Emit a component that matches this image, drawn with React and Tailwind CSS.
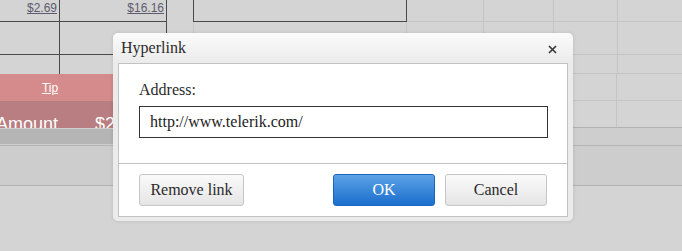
import React from "react";

// Hyperlink dialog over a dimmed spreadsheet
const Dialog = () => (
  <div
    className="absolute left-[113px] top-[33px] w-[460px] h-[188px] rounded-[5px] flex flex-col bg-[linear-gradient(#fbfbfb,#ebebeb_30px,#ebebeb)] shadow-[0_0_4px_rgba(0,0,0,0.12)] px-[5px] pb-[4px]"
    style={{ fontFamily: '"Liberation Serif", "Times New Roman", serif' }}
  >
    {/* Title bar */}
    <div className="h-[30px] flex items-center justify-between pl-[3px] pr-[11px] shrink-0">
      <span className="text-[16px] leading-[18px] text-[#2a2a2a]">Hyperlink</span>
      <svg width="9" height="9" viewBox="0 0 9 9" className="mt-[2px]">
        <path d="M1 1 L8 8 M8 1 L1 8" stroke="#3a3a3a" strokeWidth="1.7" />
      </svg>
    </div>

    {/* Content */}
    <div className="flex-1 bg-white border border-[#c2c2c2] flex flex-col">
      <div className="pt-[17px] pb-[25px] pl-[20px] pr-[19px] border-b border-[#c2c2c2]">
        <div className="text-[16px] leading-[18px] text-[#2a2a2a]">Address:</div>
        <div className="mt-[7px] h-[32px] border border-[#333] flex items-center pl-[10px] text-[16px] leading-[18px] text-[#222]">
          http://www.telerik.com/
        </div>
      </div>
      <div className="flex items-center pt-[10px] px-[20px]">
        <button className="w-[105px] h-[32px] rounded-[3px] border border-[#c6c6c6] bg-[linear-gradient(#fafafa,#e5e5e5)] text-[16px] leading-[18px] text-[#2a2a2a]">
          Remove link
        </button>
        <div className="flex-1" />
        <button className="w-[102px] h-[32px] rounded-[3px] border border-[#1a67c2] bg-[linear-gradient(#5ca2e6,#1b6ecd)] text-[16px] leading-[18px] text-white">
          OK
        </button>
        <button className="ml-[10px] w-[102px] h-[32px] rounded-[3px] border border-[#c6c6c6] bg-[linear-gradient(#fafafa,#e5e5e5)] text-[16px] leading-[18px] text-[#2a2a2a]">
          Cancel
        </button>
      </div>
    </div>
  </div>
);

export default function App() {
  return (
    <div
      className="relative w-[682px] h-[251px] overflow-hidden bg-[#d4d4d4]"
      style={{ fontFamily: '"Liberation Sans", Arial, sans-serif' }}
    >
      <div className="flex flex-col">
        {/* Row 1 */}
        <div className="flex h-[22px]">
          <div className="w-[60px] shrink-0 border-r border-b border-[#4a4a4a] text-right pr-[2px] text-[12px] leading-[15px] pt-[1px] text-[#5c5c6e] underline">$2.69</div>
          <div className="w-[107px] shrink-0 border-r border-b border-[#4a4a4a] text-right pr-[2px] text-[12px] leading-[15px] pt-[1px] text-[#5c5c6e] underline">$16.16</div>
          <div className="w-[27px] shrink-0 border-r border-[#4a4a4a] border-b-[#c4c4c4]" />
          <div className="w-[213px] shrink-0 border-r border-b border-[#4a4a4a]" />
          <div className="w-[77px] shrink-0 border-r border-b border-[#c4c4c4]" />
          <div className="w-[70px] shrink-0 border-r border-b border-[#c4c4c4]" />
          <div className="w-[64px] shrink-0 border-r border-b border-[#c4c4c4]" />
          <div className="flex-1 border-b border-[#c4c4c4]" />
        </div>
        {/* Row 2 */}
        <div className="flex h-[33px]">
          <div className="w-[60px] shrink-0 border-r border-b border-[#4a4a4a]" />
          <div className="w-[107px] shrink-0 border-r border-b border-[#4a4a4a]" />
          <div className="w-[27px] shrink-0 border-r border-b border-[#c4c4c4]" />
          <div className="w-[213px] shrink-0 border-r border-b border-[#c4c4c4]" />
          <div className="w-[77px] shrink-0 border-r border-b border-[#c4c4c4]" />
          <div className="w-[70px] shrink-0 border-r border-b border-[#c4c4c4]" />
          <div className="w-[64px] shrink-0 border-r border-b border-[#c4c4c4]" />
          <div className="flex-1 border-b border-[#c4c4c4]" />
        </div>
        {/* Row 3 */}
        <div className="flex h-[19px]">
          <div className="w-[60px] shrink-0 border-r border-[#4a4a4a]" />
          <div className="w-[107px] shrink-0 border-r border-[#4a4a4a]" />
          <div className="w-[27px] shrink-0 border-r border-b border-[#c4c4c4]" />
          <div className="w-[213px] shrink-0 border-r border-b border-[#c4c4c4]" />
          <div className="w-[77px] shrink-0 border-r border-b border-[#c4c4c4]" />
          <div className="w-[70px] shrink-0 border-r border-b border-[#c4c4c4]" />
          <div className="w-[64px] shrink-0 border-r border-b border-[#c4c4c4]" />
          <div className="flex-1 border-b border-[#c4c4c4]" />
        </div>
        {/* Pink summary band */}
        <div className="flex h-[54px]">
          <div className="w-[573px] shrink-0 flex flex-col">
            <div className="h-[27px] bg-[#d58a8b] flex">
              <div className="w-[100px] text-center text-white underline text-[12px] leading-[15px] pt-[7px]">Tip</div>
            </div>
            <div className="h-[27px] bg-[#b87e81] overflow-hidden flex text-white text-[18px] leading-[18px] pt-[14px]">
              <span className="ml-[-4px]">Amount</span>
              <span className="ml-[37px]">$2</span>
            </div>
          </div>
          <div className="flex-1 flex flex-col">
            <div className="h-[27px] flex border-b border-[#c4c4c4]">
              <div className="w-[44px] border-r border-[#c4c4c4]" />
              <div className="flex-1" />
            </div>
            <div className="h-[27px] flex border-b border-[#b2b2b2]">
              <div className="w-[44px] border-r border-[#c4c4c4]" />
              <div className="flex-1" />
            </div>
          </div>
        </div>
        {/* Scroll bar / footer bands */}
        <div className="flex h-[17px]">
          <div className="w-[573px] shrink-0 bg-[#cfcfcf] pt-[1px]">
            <div className="h-[15px] bg-[#b5b5b5]" />
          </div>
          <div className="flex-1 bg-[#cecece]" />
        </div>
        <div className="h-[41px] bg-[#cdcdcd] border-t border-b border-[#b3b3b3]" />
      </div>

      <Dialog />
    </div>
  );
}
